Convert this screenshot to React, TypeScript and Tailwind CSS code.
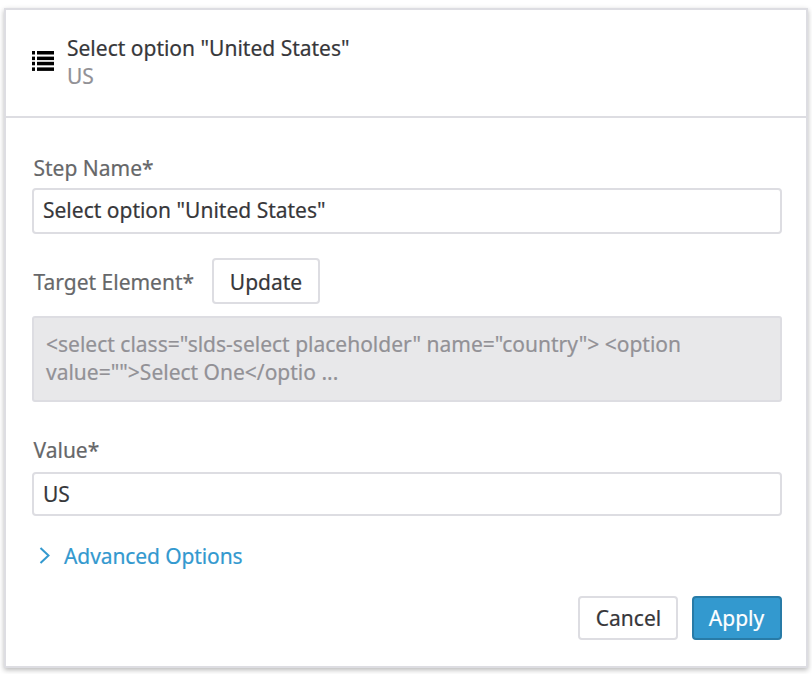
import React from "react";

function ListIcon() {
  return (
    <svg width="22" height="20" viewBox="0 0 22 20" fill="black" className="relative -top-[2px] shrink-0">
      {[0, 5.6, 10.8, 16.4].map((y) => (
        <g key={y}>
          <rect x="0" y={y} width="3" height="3.5" />
          <rect x="5" y={y} width="17" height="3.5" />
        </g>
      ))}
    </svg>
  );
}

function Label({ children }: { children: React.ReactNode }) {
  return <label className="block pl-[1.5px] leading-7 text-[#666769]">{children}</label>;
}

function TextField({ value, className }: { value: string; className: string }) {
  return (
    <input
      type="text"
      defaultValue={value}
      className={`block w-full rounded border-2 border-[#dddde2] bg-white px-[9px] text-[#37373a] outline-none ${className}`}
    />
  );
}

export default function App() {
  return (
    <div className="h-[674px] w-[812px] bg-white px-1 pt-2 font-['Noto_Sans',sans-serif] text-[21px] leading-7 text-[#37373a] [-webkit-text-stroke:0.2px]">
      <section className="h-[660px] w-[804px] border-2 border-[#dddde2] bg-white shadow-[0_2px_5px_rgba(0,0,0,0.28)]">
        <header className="flex h-[108px] items-center gap-[13px] border-b-2 border-[#dddde2] pl-[26px]">
          <ListIcon />
          <div className="pb-[3px]">
            <h1>Select option "United States"</h1>
            <p className="text-[#929196]">US</p>
          </div>
        </header>
        <form className="px-6 pt-9 pl-[26px]">
          <Label>Step Name*</Label>
          <TextField value={'Select option "United States"'} className="mt-[6px] h-[46px] pb-[2px]" />
          <div className="mt-6 flex h-[46px] items-center justify-between">
            <div className="pt-[2px]">
              <Label>Target Element*</Label>
            </div>
            <button type="button" className="mr-[462px] h-[46px] w-[108px] rounded border-2 border-[#dddde2] bg-white pt-px">
              Update
            </button>
          </div>
          <div className="mt-3 h-[86px] rounded-[3px] border-2 border-[#dddde2] bg-[#e8e8ea] px-3 pt-3 text-[#929196]">
            {'<select class="slds-select placeholder" name="country"> <option'}
            <br />
            {'value="">Select One</optio ...'}
          </div>
          <div className="mt-[34px]">
            <Label>Value*</Label>
          </div>
          <TextField value="US" className="mt-2 h-11" />
          <button type="button" className="mt-[26px] flex items-center pl-[7px] tracking-[-0.1px] text-[#3399cf]">
            <svg width="12" height="18" viewBox="0 0 12 18" fill="none" stroke="currentColor" strokeWidth="2" className="mr-[13px]">
              <path d="M1.5 1 L9.5 8.5 L1.5 16" />
            </svg>
            Advanced Options
          </button>
          <div className="mt-[26px] flex justify-end gap-[14px]">
            <button type="button" className="h-11 w-[100px] rounded border-2 border-[#dddde2] bg-white pl-px">
              Cancel
            </button>
            <button type="button" className="h-11 w-[90px] rounded border-2 border-[#287ba7] bg-[#3399cf] pr-px text-white">
              Apply
            </button>
          </div>
        </form>
      </section>
    </div>
  );
}
